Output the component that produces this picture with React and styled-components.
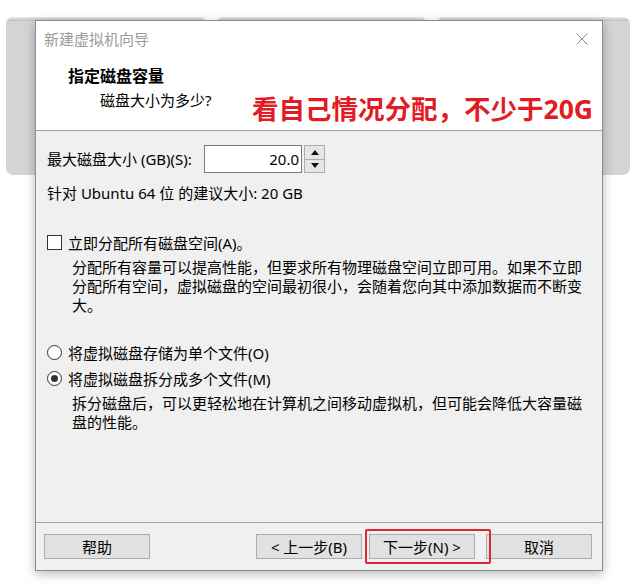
import React from "react";
import styled, { createGlobalStyle } from "styled-components";

const FONT = `"Noto Sans", "Noto Sans CJK SC", sans-serif`;

const GlobalStyle = createGlobalStyle`
  html, body { margin: 0; padding: 0; background: #ffffff; }
  body { font-family: ${FONT}; color: #000; }
  * { box-sizing: border-box; }
`;

const Page = styled.div`
  position: relative;
  width: 642px;
  height: 586px;
  overflow: hidden;
  background: #ffffff;
  padding: 17px 12px 0 6px;
`;

const Backdrop = styled.div`
  width: 624px;
  height: 158px;
  display: flex;
  flex-direction: column;
  background: #d4d4d4;
  border-radius: 7px;
  overflow: hidden;
`;

const TabStrip = styled.div`
  display: flex;
  height: 4px;
`;

const TabSegment = styled.div`
  flex: 0 0 ${(p) => p.$w}px;
  background: linear-gradient(#ececec, #bdbdbd);
`;

const Notch = styled.div`
  flex: 0 0 17px;
  background: #ffffff;
  border-radius: 0 0 8px 8px / 0 0 4px 4px;
`;

const Dialog = styled.div`
  position: absolute;
  left: 35px;
  top: 20px;
  width: 568px;
  height: 551px;
  display: flex;
  flex-direction: column;
  border: 1px solid #8c8c8c;
  background: #f0f0f0;
  box-shadow: 0 3px 10px rgba(0, 0, 0, 0.28);
`;

const Header = styled.div`
  flex: 0 0 110px;
  background: #ffffff;
  border-bottom: 1px solid #a0a0a0;
  display: flex;
  flex-direction: column;
`;

const TitleBar = styled.div`
  height: 39px;
  display: flex;
  align-items: center;
  justify-content: space-between;
  padding: 0 14px 3px 8px;
`;

const TitleText = styled.span`
  font-size: 15px;
  line-height: 20px;
  color: #9a9a9a;
`;

const CloseIcon = styled.svg`
  width: 12px;
  height: 12px;
  display: block;
`;

const HeaderContent = styled.div`
  flex: 1;
  display: flex;
  justify-content: space-between;
  padding: 6px 9px 6px 32px;
`;

const HeaderText = styled.div`
  display: flex;
  flex-direction: column;
  gap: 4px;
`;

const StepTitle = styled.div`
  font-size: 16px;
  font-weight: 700;
  line-height: 20px;
`;

const StepSubtitle = styled.div`
  font-size: 15px;
  line-height: 20px;
  padding-left: 32px;
`;

const Annotation = styled.div`
  align-self: flex-end;
  font-size: 26.5px;
  font-weight: 700;
  line-height: 30px;
  color: #e31b23;
  white-space: nowrap;
`;

const Body = styled.div`
  flex: 1;
  padding: 14px 12px 0 11px;
  font-size: 15px;
`;

const SizeRow = styled.div`
  display: flex;
  align-items: center;
  height: 28px;
`;

const FieldLabel = styled.span`
  flex: 0 0 157px;
  line-height: 20px;
  white-space: nowrap;
`;

const NumberInput = styled.div`
  width: 98px;
  height: 28px;
  background: #ffffff;
  border: 1px solid #7a7a7a;
  display: flex;
  align-items: center;
  justify-content: flex-end;
  padding-right: 2px;
  line-height: 20px;
`;

const Spinner = styled.div`
  width: 21px;
  height: 28px;
  margin-left: 2px;
  display: flex;
  flex-direction: column;
  border: 1px solid #adadad;
  background: #e6e6e6;
`;

const SpinButton = styled.div`
  flex: 1;
  display: flex;
  align-items: center;
  justify-content: center;
  & + & {
    border-top: 1px solid #adadad;
  }
`;

const TextLine = styled.div`
  margin-top: ${(p) => p.$mt || 0}px;
  line-height: 20px;
  white-space: nowrap;
`;

const OptionRow = styled.div`
  display: flex;
  align-items: center;
  gap: 6px;
  height: 20px;
  margin-top: ${(p) => p.$mt || 0}px;
  white-space: nowrap;
`;

const CheckBox = styled.span`
  flex: 0 0 15px;
  width: 15px;
  height: 15px;
  background: #ffffff;
  border: 1px solid #333333;
`;

const Radio = styled.span`
  flex: 0 0 15px;
  width: 15px;
  height: 15px;
  border-radius: 50%;
  background: #ffffff;
  border: 1px solid #333333;
  display: flex;
  align-items: center;
  justify-content: center;
  &::after {
    content: "";
    width: 7px;
    height: 7px;
    border-radius: 50%;
    background: ${(p) => (p.$checked ? "#333333" : "transparent")};
  }
`;

const Description = styled.p`
  margin: ${(p) => p.$mt || 0}px 0 0 0;
  padding-left: 25px;
  width: 543px;
  line-height: 19px;
  line-break: strict;
`;

const Footer = styled.div`
  flex: 0 0 48px;
  border-top: 1px solid #a0a0a0;
  display: flex;
  align-items: flex-start;
  padding: 11px 10px 11px 8px;
`;

const Button = styled.button`
  width: 106px;
  height: 25px;
  margin-left: ${(p) => p.$ml || 0}px;
  padding: 0;
  background: #e1e1e1;
  border: 1px solid #adadad;
  border-radius: 0;
  font-family: ${FONT};
  font-size: 15px;
  line-height: 20px;
  color: #000;
  white-space: nowrap;
`;

const Spacer = styled.div`
  flex: 1;
`;

const Highlight = styled.div`
  position: relative;
  margin-left: 7px;
`;

const RedBox = styled.div`
  position: absolute;
  top: -5px;
  left: -4px;
  right: -16px;
  bottom: -5px;
  border: 2px solid #e0262e;
  border-radius: 2px;
  pointer-events: none;
`;

function Arrow({ up }) {
  return (
    <svg width="8" height="5" viewBox="0 0 8 5">
      <path d={up ? "M0 5 L4 0 L8 5 Z" : "M0 0 L8 0 L4 5 Z"} fill="#111" />
    </svg>
  );
}

export default function App() {
  return (
    <>
      <GlobalStyle />
      <Page>
        <Backdrop>
          <TabStrip>
            <TabSegment $w={197} />
            <Notch />
            <TabSegment $w={203} />
            <Notch />
            <TabSegment $w={190} />
          </TabStrip>
        </Backdrop>

        <Dialog>
          <Header>
            <TitleBar>
              <TitleText>新建虚拟机向导</TitleText>
              <CloseIcon viewBox="0 0 12 12">
                <path d="M0.5 0.5 L11.5 11.5 M11.5 0.5 L0.5 11.5" stroke="#8a8a8a" strokeWidth="1" />
              </CloseIcon>
            </TitleBar>
            <HeaderContent>
              <HeaderText>
                <StepTitle>指定磁盘容量</StepTitle>
                <StepSubtitle>磁盘大小为多少?</StepSubtitle>
              </HeaderText>
              <Annotation>看自己情况分配，不少于20G</Annotation>
            </HeaderContent>
          </Header>

          <Body>
            <SizeRow>
              <FieldLabel>最大磁盘大小 (GB)(S):</FieldLabel>
              <NumberInput>20.0</NumberInput>
              <Spinner>
                <SpinButton><Arrow up /></SpinButton>
                <SpinButton><Arrow /></SpinButton>
              </Spinner>
            </SizeRow>
            <TextLine $mt={10}>针对 Ubuntu 64 位 的建议大小: 20 GB</TextLine>

            <OptionRow $mt={29}>
              <CheckBox />
              <span>立即分配所有磁盘空间(A)。</span>
            </OptionRow>
            <Description $mt={6}>
              分配所有容量可以提高性能，但要求所有物理磁盘空间立即可用。如果不立即分配所有空间，虚拟磁盘的空间最初很小，会随着您向其中添加数据而不断变大。
            </Description>

            <OptionRow $mt={27}>
              <Radio />
              <span>将虚拟磁盘存储为单个文件(O)</span>
            </OptionRow>
            <OptionRow $mt={6}>
              <Radio $checked />
              <span>将虚拟磁盘拆分成多个文件(M)</span>
            </OptionRow>
            <Description $mt={6}>
              拆分磁盘后，可以更轻松地在计算机之间移动虚拟机，但可能会降低大容量磁盘的性能。
            </Description>
          </Body>

          <Footer>
            <Button>帮助</Button>
            <Spacer />
            <Button>&lt; 上一步(B)</Button>
            <Highlight>
              <Button>下一步(N) &gt;</Button>
              <RedBox />
            </Highlight>
            <Button $ml={11}>取消</Button>
          </Footer>
        </Dialog>
      </Page>
    </>
  );
}
